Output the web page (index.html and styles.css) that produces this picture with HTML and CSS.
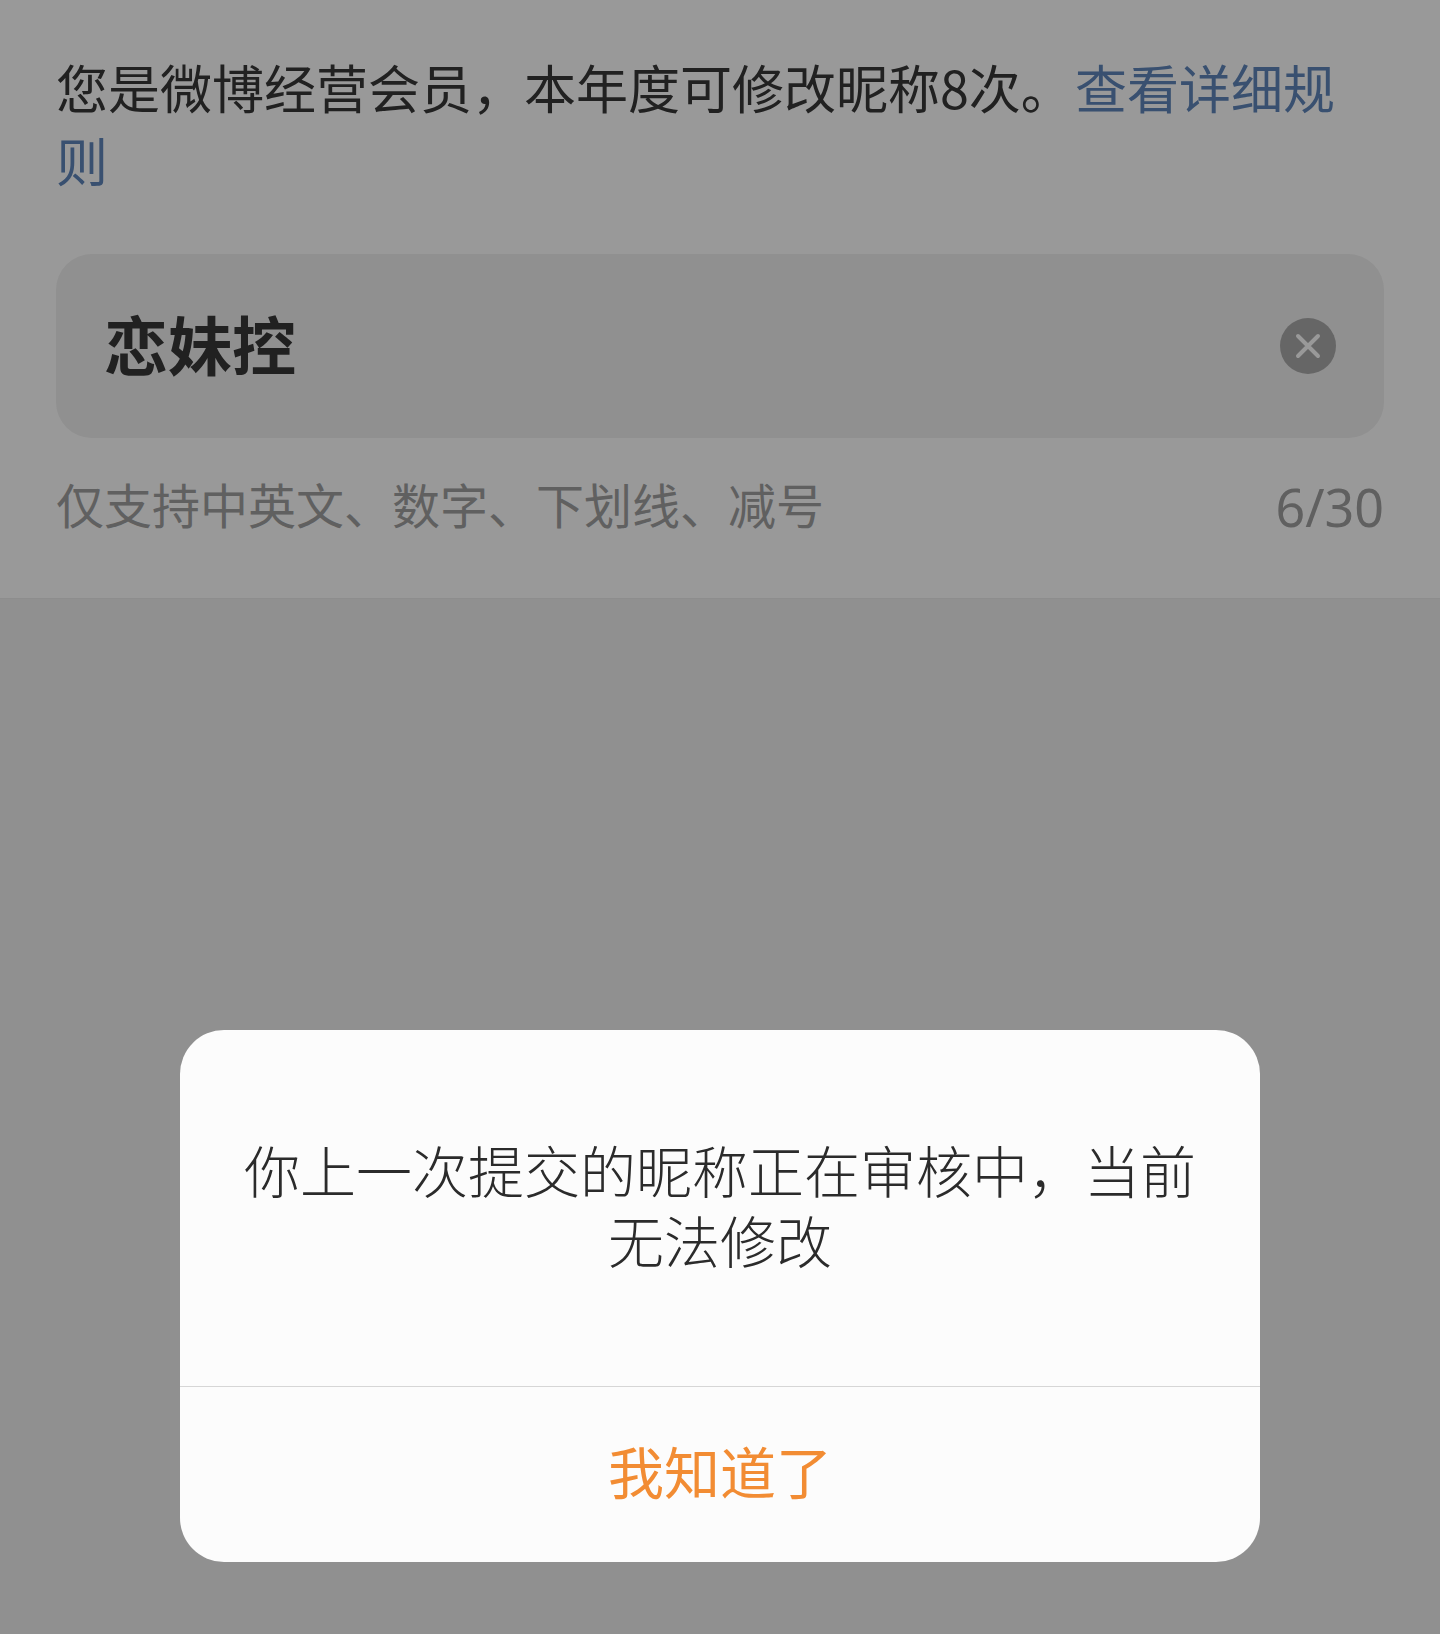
FILE: index.html
```html
<!DOCTYPE html>
<html lang="zh-CN">
<head>
    <meta charset="UTF-8">
    <title>修改昵称</title>
    <link rel="stylesheet" href="styles.css">
</head>
<body>
    <div class="page">
        <div class="panel">
            <p class="notice">您是微博经营会员，本年度可修改昵称8次。<a class="rule-link" href="javascript:;">查看详细规则</a></p>
            <div class="name-field">
                <span class="name-value">恋妹控</span>
                <span class="clear-btn">
                    <svg viewBox="0 0 56 56" width="56" height="56">
                        <circle cx="28" cy="28" r="28" fill="#aaaaaa"/>
                        <path d="M18 18L38 38M38 18L18 38" stroke="#ffffff" stroke-width="4" stroke-linecap="round" fill="none"/>
                    </svg>
                </span>
            </div>
            <div class="hint-row">
                <span>仅支持中英文、数字、下划线、减号</span>
                <span class="counter">6/30</span>
            </div>
        </div>
    </div>
    <div class="mask">
        <div class="dialog">
            <div class="dialog-body">你上一次提交的昵称正在审核中，当前无法修改</div>
            <div class="dialog-btn">我知道了</div>
        </div>
    </div>
</body>
</html>
```

FILE: styles.css
```css
* {
    margin: 0;
    padding: 0;
    box-sizing: border-box;
}

html, body {
    height: 100%;
}

body {
    font-family: "Noto Sans CJK SC", "Noto Sans", sans-serif;
    background-color: #f0f0f0;
    overflow: hidden;
}

.page {
    height: 1634px;
}

.panel {
    height: 599px;
    padding: 50px 56px 0;
    background-color: #ffffff;
    border-bottom: 1px solid #ebebeb;
}

.notice {
    font-size: 52px;
    line-height: 73px;
    font-weight: 400;
    color: #383838;
}

.rule-link {
    margin-left: 2px;
    color: #5f86bb;
    text-decoration: none;
}

.name-field {
    display: flex;
    align-items: center;
    justify-content: space-between;
    height: 184px;
    margin-top: 58px;
    padding: 0 48px;
    background-color: #f0f0f0;
    border-radius: 36px;
}

.name-value {
    margin-bottom: 8px;
    font-size: 64px;
    font-weight: 700;
    color: #383838;
}

.clear-btn {
    display: flex;
}

.hint-row {
    display: flex;
    justify-content: space-between;
    align-items: flex-start;
    margin-top: 30px;
    font-size: 48px;
    line-height: 70px;
    color: #a0a0a0;
}

.counter {
    font-family: "Noto Sans", sans-serif;
    font-size: 52px;
    margin-top: 4px;
}

.mask {
    position: fixed;
    top: 0;
    left: 0;
    right: 0;
    bottom: 0;
    display: flex;
    justify-content: center;
    align-items: flex-start;
    padding-top: 1030px;
    background-color: rgba(0, 0, 0, 0.4);
}

.dialog {
    width: 1080px;
    height: 532px;
    background-color: #fcfcfc;
    border-radius: 44px;
}

.dialog-body {
    display: flex;
    align-items: center;
    justify-content: center;
    height: 357px;
    padding: 0 60px 8px;
    font-size: 56px;
    line-height: 70px;
    font-weight: 300;
    text-align: center;
    color: #2b2b2b;
    border-bottom: 1px solid #d6d6d6;
}

.dialog-btn {
    height: 175px;
    line-height: 165px;
    font-size: 56px;
    text-align: center;
    color: #f28c33;
}
```
